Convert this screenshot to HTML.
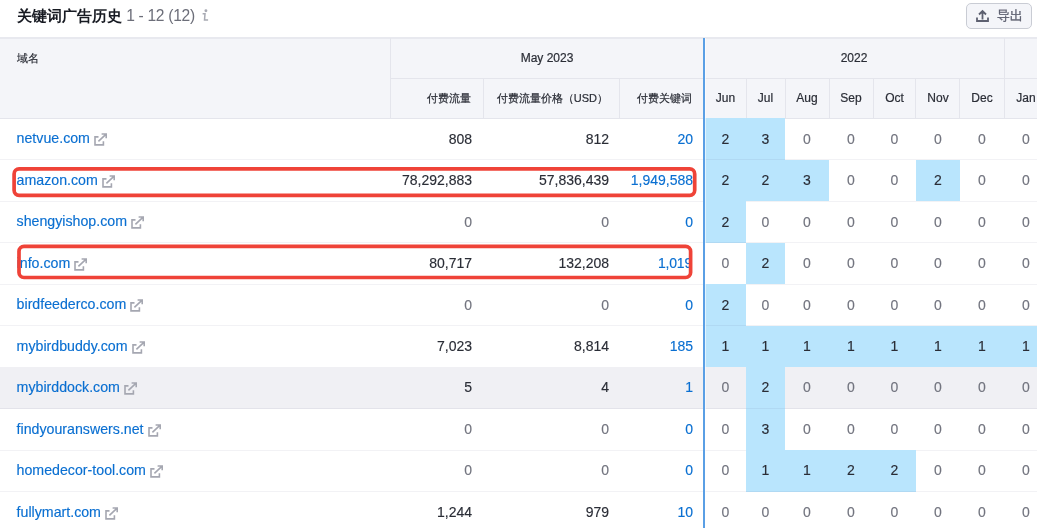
<!DOCTYPE html><html><head><meta charset="utf-8"><style>
*{margin:0;padding:0;box-sizing:border-box}
html,body{width:1037px;height:528px;overflow:hidden;background:#fff;font-family:"Liberation Sans",sans-serif;color:#171a22}
.abs{position:absolute}
.title{left:17px;top:6px;font-size:15px;font-weight:bold;color:#171a22;line-height:20px;white-space:nowrap}
.title .cnt{font-weight:normal;color:#6c6e79;font-size:15.6px;letter-spacing:-0.3px}
.title .i{font-style:italic;color:#a4a6ae;font-family:"Liberation Serif",serif;font-size:14px;margin-left:6px}
.exp{left:966px;top:3px;width:66px;height:26px;border:1px solid #c9ccd4;border-radius:5px;background:#f4f5f9;font-size:13px;color:#5d6070}
.hdr{left:0;top:37px;width:1037px;height:82px;background:#f4f5f9;border-top:2px solid #e8e9ef;border-bottom:1px solid #e4e5ec}
.vl{width:1px;background:#e4e5ec}
.hl{height:1px;background:#e4e5ec}
.ht{font-size:12px;color:#2a2d36;white-space:nowrap;line-height:14px;-webkit-text-stroke:0.2px #2a2d36}
.row{left:0;width:1037px}
.rb{left:0;width:1037px;height:1px;background:rgba(30,40,80,0.06)}
.cell{position:absolute;top:0;bottom:0;display:flex;align-items:center;font-size:14px;white-space:nowrap;color:#2a2d36;-webkit-text-stroke:0.15px currentColor;padding-bottom:1px}
.num{justify-content:flex-end;padding-right:11px}
.mc{justify-content:center}
.blue{background:#b9e5fd}
.link{color:#0a6fd1}
.dom{font-size:14.2px;padding-bottom:1.5px}
.zero{color:#72747f}
.ext{margin-left:4px;position:relative;top:1px}
</style></head><body><div id="wrap" style="position:absolute;left:0;top:0;width:1037px;height:528px;will-change:transform">
<div class="abs title">关键词广告历史 <span class="cnt">1 - 12 (12)</span></div>
<div class="abs exp"><svg class="abs" style="left:8px;top:4px" width="15" height="15" viewBox="0 0 15 15"><path d="M7.5 11.5V3M4 6.5L7.5 3L11 6.5M2 9.5V13H13V9.5" fill="none" stroke="#5d6070" stroke-width="1.8"/></svg><span class="abs" style="left:30px;top:3px;-webkit-text-stroke:0.3px #5d6070">导出</span></div>
<svg class="abs" style="left:200px;top:8px" width="12" height="15" viewBox="0 0 12 15"><circle cx="5.9" cy="2.8" r="1.45" fill="#a8aab3"/><path d="M2.6 5.8H5L4.5 12.1H8.1" fill="none" stroke="#a8aab3" stroke-width="1.5"/></svg>
<div class="abs hdr"></div>
<div class="abs ht" style="left:17px;top:51px;font-size:11px">域名</div>
<div class="abs vl" style="left:390px;top:38px;height:80px"></div>
<div class="abs hl" style="left:390px;top:78px;width:647px"></div>
<div class="abs vl" style="left:1004px;top:38px;height:80px"></div>
<div class="abs vl" style="left:483px;top:78px;height:40px"></div>
<div class="abs vl" style="left:619px;top:78px;height:40px"></div>
<div class="abs vl" style="left:746px;top:78px;height:40px"></div>
<div class="abs vl" style="left:785px;top:78px;height:40px"></div>
<div class="abs vl" style="left:829px;top:78px;height:40px"></div>
<div class="abs vl" style="left:873px;top:78px;height:40px"></div>
<div class="abs vl" style="left:915px;top:78px;height:40px"></div>
<div class="abs vl" style="left:959px;top:78px;height:40px"></div>
<div class="abs ht" style="left:390px;width:314px;top:51px;text-align:center">May 2023</div>
<div class="abs ht" style="left:704px;width:300px;top:51px;text-align:center">2022</div>
<div class="abs ht" style="left:390px;width:93px;top:91px;text-align:right;padding-right:12px;font-size:11px">付费流量</div>
<div class="abs ht" style="left:483px;width:137px;top:91px;text-align:right;padding-right:12px;font-size:11px">付费流量价格（USD）</div>
<div class="abs ht" style="left:620px;width:84px;top:91px;text-align:right;padding-right:12px;font-size:11px">付费关键词</div>
<div class="abs ht" style="left:705px;width:41px;top:91px;text-align:center">Jun</div>
<div class="abs ht" style="left:746px;width:39px;top:91px;text-align:center">Jul</div>
<div class="abs ht" style="left:785px;width:44px;top:91px;text-align:center">Aug</div>
<div class="abs ht" style="left:829px;width:44px;top:91px;text-align:center">Sep</div>
<div class="abs ht" style="left:873px;width:43px;top:91px;text-align:center">Oct</div>
<div class="abs ht" style="left:916px;width:44px;top:91px;text-align:center">Nov</div>
<div class="abs ht" style="left:960px;width:44px;top:91px;text-align:center">Dec</div>
<div class="abs ht" style="left:1004px;width:44px;top:91px;text-align:center">Jan</div>
<div class="abs row" style="top:118.4px;height:41.47px;">
<div class="cell link dom" style="left:16.6px;width:370px"><span>netvue.com</span><svg class="ext" width="14" height="14" viewBox="0.2 -0.7 14 14"><path d="M4.7 4.2H1.2V12.2H9.6V8.5" fill="none" stroke="#a5a7b1" stroke-width="1.6"/><path d="M4.6 8.6L12.3 1.4M7.8 1.3H12.4V5.6" fill="none" stroke="#a5a7b1" stroke-width="1.6"/></svg></div>
<div class="cell num " style="left:390px;width:93px">808</div>
<div class="cell num " style="left:483px;width:137px">812</div>
<div class="cell num link" style="left:620px;width:84px;">20</div>
<div class="cell mc blue" style="left:705px;width:41px">2</div>
<div class="cell mc blue" style="left:746px;width:39px">3</div>
<div class="cell mc zero" style="left:785px;width:44px">0</div>
<div class="cell mc zero" style="left:829px;width:44px">0</div>
<div class="cell mc zero" style="left:873px;width:43px">0</div>
<div class="cell mc zero" style="left:916px;width:44px">0</div>
<div class="cell mc zero" style="left:960px;width:44px">0</div>
<div class="cell mc zero" style="left:1004px;width:44px">0</div>
</div>
<div class="abs rb" style="top:159.37px"></div>
<div class="abs row" style="top:159.87px;height:41.47px;">
<div class="cell link dom" style="left:16.6px;width:370px"><span>amazon.com</span><svg class="ext" width="14" height="14" viewBox="0.2 -0.7 14 14"><path d="M4.7 4.2H1.2V12.2H9.6V8.5" fill="none" stroke="#a5a7b1" stroke-width="1.6"/><path d="M4.6 8.6L12.3 1.4M7.8 1.3H12.4V5.6" fill="none" stroke="#a5a7b1" stroke-width="1.6"/></svg></div>
<div class="cell num " style="left:390px;width:93px">78,292,883</div>
<div class="cell num " style="left:483px;width:137px">57,836,439</div>
<div class="cell num link" style="left:620px;width:84px;">1,949,588</div>
<div class="cell mc blue" style="left:705px;width:41px">2</div>
<div class="cell mc blue" style="left:746px;width:39px">2</div>
<div class="cell mc blue" style="left:785px;width:44px">3</div>
<div class="cell mc zero" style="left:829px;width:44px">0</div>
<div class="cell mc zero" style="left:873px;width:43px">0</div>
<div class="cell mc blue" style="left:916px;width:44px">2</div>
<div class="cell mc zero" style="left:960px;width:44px">0</div>
<div class="cell mc zero" style="left:1004px;width:44px">0</div>
</div>
<div class="abs rb" style="top:200.84px"></div>
<div class="abs row" style="top:201.34px;height:41.47px;">
<div class="cell link dom" style="left:16.6px;width:370px"><span>shengyishop.com</span><svg class="ext" width="14" height="14" viewBox="0.2 -0.7 14 14"><path d="M4.7 4.2H1.2V12.2H9.6V8.5" fill="none" stroke="#a5a7b1" stroke-width="1.6"/><path d="M4.6 8.6L12.3 1.4M7.8 1.3H12.4V5.6" fill="none" stroke="#a5a7b1" stroke-width="1.6"/></svg></div>
<div class="cell num zero" style="left:390px;width:93px">0</div>
<div class="cell num zero" style="left:483px;width:137px">0</div>
<div class="cell num link" style="left:620px;width:84px;">0</div>
<div class="cell mc blue" style="left:705px;width:41px">2</div>
<div class="cell mc zero" style="left:746px;width:39px">0</div>
<div class="cell mc zero" style="left:785px;width:44px">0</div>
<div class="cell mc zero" style="left:829px;width:44px">0</div>
<div class="cell mc zero" style="left:873px;width:43px">0</div>
<div class="cell mc zero" style="left:916px;width:44px">0</div>
<div class="cell mc zero" style="left:960px;width:44px">0</div>
<div class="cell mc zero" style="left:1004px;width:44px">0</div>
</div>
<div class="abs rb" style="top:242.31px"></div>
<div class="abs row" style="top:242.81px;height:41.47px;">
<div class="cell link dom" style="left:16.6px;width:370px"><span>info.com</span><svg class="ext" width="14" height="14" viewBox="0.2 -0.7 14 14"><path d="M4.7 4.2H1.2V12.2H9.6V8.5" fill="none" stroke="#a5a7b1" stroke-width="1.6"/><path d="M4.6 8.6L12.3 1.4M7.8 1.3H12.4V5.6" fill="none" stroke="#a5a7b1" stroke-width="1.6"/></svg></div>
<div class="cell num " style="left:390px;width:93px">80,717</div>
<div class="cell num " style="left:483px;width:137px">132,208</div>
<div class="cell num link" style="left:620px;width:84px;padding-right:12px;letter-spacing:-0.2px;">1,019</div>
<div class="cell mc zero" style="left:705px;width:41px">0</div>
<div class="cell mc blue" style="left:746px;width:39px">2</div>
<div class="cell mc zero" style="left:785px;width:44px">0</div>
<div class="cell mc zero" style="left:829px;width:44px">0</div>
<div class="cell mc zero" style="left:873px;width:43px">0</div>
<div class="cell mc zero" style="left:916px;width:44px">0</div>
<div class="cell mc zero" style="left:960px;width:44px">0</div>
<div class="cell mc zero" style="left:1004px;width:44px">0</div>
</div>
<div class="abs rb" style="top:283.78px"></div>
<div class="abs row" style="top:284.28px;height:41.47px;">
<div class="cell link dom" style="left:16.6px;width:370px"><span>birdfeederco.com</span><svg class="ext" width="14" height="14" viewBox="0.2 -0.7 14 14"><path d="M4.7 4.2H1.2V12.2H9.6V8.5" fill="none" stroke="#a5a7b1" stroke-width="1.6"/><path d="M4.6 8.6L12.3 1.4M7.8 1.3H12.4V5.6" fill="none" stroke="#a5a7b1" stroke-width="1.6"/></svg></div>
<div class="cell num zero" style="left:390px;width:93px">0</div>
<div class="cell num zero" style="left:483px;width:137px">0</div>
<div class="cell num link" style="left:620px;width:84px;">0</div>
<div class="cell mc blue" style="left:705px;width:41px">2</div>
<div class="cell mc zero" style="left:746px;width:39px">0</div>
<div class="cell mc zero" style="left:785px;width:44px">0</div>
<div class="cell mc zero" style="left:829px;width:44px">0</div>
<div class="cell mc zero" style="left:873px;width:43px">0</div>
<div class="cell mc zero" style="left:916px;width:44px">0</div>
<div class="cell mc zero" style="left:960px;width:44px">0</div>
<div class="cell mc zero" style="left:1004px;width:44px">0</div>
</div>
<div class="abs rb" style="top:325.25px"></div>
<div class="abs row" style="top:325.75px;height:41.47px;">
<div class="cell link dom" style="left:16.6px;width:370px"><span>mybirdbuddy.com</span><svg class="ext" width="14" height="14" viewBox="0.2 -0.7 14 14"><path d="M4.7 4.2H1.2V12.2H9.6V8.5" fill="none" stroke="#a5a7b1" stroke-width="1.6"/><path d="M4.6 8.6L12.3 1.4M7.8 1.3H12.4V5.6" fill="none" stroke="#a5a7b1" stroke-width="1.6"/></svg></div>
<div class="cell num " style="left:390px;width:93px">7,023</div>
<div class="cell num " style="left:483px;width:137px">8,814</div>
<div class="cell num link" style="left:620px;width:84px;">185</div>
<div class="cell mc blue" style="left:705px;width:41px">1</div>
<div class="cell mc blue" style="left:746px;width:39px">1</div>
<div class="cell mc blue" style="left:785px;width:44px">1</div>
<div class="cell mc blue" style="left:829px;width:44px">1</div>
<div class="cell mc blue" style="left:873px;width:43px">1</div>
<div class="cell mc blue" style="left:916px;width:44px">1</div>
<div class="cell mc blue" style="left:960px;width:44px">1</div>
<div class="cell mc blue" style="left:1004px;width:44px">1</div>
</div>
<div class="abs rb" style="top:366.72px"></div>
<div class="abs row" style="top:367.22px;height:41.47px;background:#f0f0f4;">
<div class="cell link dom" style="left:16.6px;width:370px"><span>mybirddock.com</span><svg class="ext" width="14" height="14" viewBox="0.2 -0.7 14 14"><path d="M4.7 4.2H1.2V12.2H9.6V8.5" fill="none" stroke="#a5a7b1" stroke-width="1.6"/><path d="M4.6 8.6L12.3 1.4M7.8 1.3H12.4V5.6" fill="none" stroke="#a5a7b1" stroke-width="1.6"/></svg></div>
<div class="cell num " style="left:390px;width:93px">5</div>
<div class="cell num " style="left:483px;width:137px">4</div>
<div class="cell num link" style="left:620px;width:84px;">1</div>
<div class="cell mc zero" style="left:705px;width:41px">0</div>
<div class="cell mc blue" style="left:746px;width:39px">2</div>
<div class="cell mc zero" style="left:785px;width:44px">0</div>
<div class="cell mc zero" style="left:829px;width:44px">0</div>
<div class="cell mc zero" style="left:873px;width:43px">0</div>
<div class="cell mc zero" style="left:916px;width:44px">0</div>
<div class="cell mc zero" style="left:960px;width:44px">0</div>
<div class="cell mc zero" style="left:1004px;width:44px">0</div>
</div>
<div class="abs rb" style="top:408.19px"></div>
<div class="abs row" style="top:408.69px;height:41.47px;">
<div class="cell link dom" style="left:16.6px;width:370px"><span>findyouranswers.net</span><svg class="ext" width="14" height="14" viewBox="0.2 -0.7 14 14"><path d="M4.7 4.2H1.2V12.2H9.6V8.5" fill="none" stroke="#a5a7b1" stroke-width="1.6"/><path d="M4.6 8.6L12.3 1.4M7.8 1.3H12.4V5.6" fill="none" stroke="#a5a7b1" stroke-width="1.6"/></svg></div>
<div class="cell num zero" style="left:390px;width:93px">0</div>
<div class="cell num zero" style="left:483px;width:137px">0</div>
<div class="cell num link" style="left:620px;width:84px;">0</div>
<div class="cell mc zero" style="left:705px;width:41px">0</div>
<div class="cell mc blue" style="left:746px;width:39px">3</div>
<div class="cell mc zero" style="left:785px;width:44px">0</div>
<div class="cell mc zero" style="left:829px;width:44px">0</div>
<div class="cell mc zero" style="left:873px;width:43px">0</div>
<div class="cell mc zero" style="left:916px;width:44px">0</div>
<div class="cell mc zero" style="left:960px;width:44px">0</div>
<div class="cell mc zero" style="left:1004px;width:44px">0</div>
</div>
<div class="abs rb" style="top:449.66px"></div>
<div class="abs row" style="top:450.16px;height:41.47px;">
<div class="cell link dom" style="left:16.6px;width:370px"><span>homedecor-tool.com</span><svg class="ext" width="14" height="14" viewBox="0.2 -0.7 14 14"><path d="M4.7 4.2H1.2V12.2H9.6V8.5" fill="none" stroke="#a5a7b1" stroke-width="1.6"/><path d="M4.6 8.6L12.3 1.4M7.8 1.3H12.4V5.6" fill="none" stroke="#a5a7b1" stroke-width="1.6"/></svg></div>
<div class="cell num zero" style="left:390px;width:93px">0</div>
<div class="cell num zero" style="left:483px;width:137px">0</div>
<div class="cell num link" style="left:620px;width:84px;">0</div>
<div class="cell mc zero" style="left:705px;width:41px">0</div>
<div class="cell mc blue" style="left:746px;width:39px">1</div>
<div class="cell mc blue" style="left:785px;width:44px">1</div>
<div class="cell mc blue" style="left:829px;width:44px">2</div>
<div class="cell mc blue" style="left:873px;width:43px">2</div>
<div class="cell mc zero" style="left:916px;width:44px">0</div>
<div class="cell mc zero" style="left:960px;width:44px">0</div>
<div class="cell mc zero" style="left:1004px;width:44px">0</div>
</div>
<div class="abs rb" style="top:491.13px"></div>
<div class="abs row" style="top:491.63px;height:41.47px;">
<div class="cell link dom" style="left:16.6px;width:370px"><span>fullymart.com</span><svg class="ext" width="14" height="14" viewBox="0.2 -0.7 14 14"><path d="M4.7 4.2H1.2V12.2H9.6V8.5" fill="none" stroke="#a5a7b1" stroke-width="1.6"/><path d="M4.6 8.6L12.3 1.4M7.8 1.3H12.4V5.6" fill="none" stroke="#a5a7b1" stroke-width="1.6"/></svg></div>
<div class="cell num " style="left:390px;width:93px">1,244</div>
<div class="cell num " style="left:483px;width:137px">979</div>
<div class="cell num link" style="left:620px;width:84px;">10</div>
<div class="cell mc zero" style="left:705px;width:41px">0</div>
<div class="cell mc zero" style="left:746px;width:39px">0</div>
<div class="cell mc zero" style="left:785px;width:44px">0</div>
<div class="cell mc zero" style="left:829px;width:44px">0</div>
<div class="cell mc zero" style="left:873px;width:43px">0</div>
<div class="cell mc zero" style="left:916px;width:44px">0</div>
<div class="cell mc zero" style="left:960px;width:44px">0</div>
<div class="cell mc zero" style="left:1004px;width:44px">0</div>
</div>
<div class="abs" style="left:703px;top:38px;width:2px;height:490px;background:#5a9fe5;box-shadow:1px 0 0 rgba(255,255,255,0.6)"></div>
<svg class="abs" style="left:0;top:0" width="1037" height="528"><rect x="14.1" y="168.9" width="680.6" height="26.4" rx="5" fill="none" stroke="#ef4338" stroke-width="3.7"/><rect x="19" y="246.3" width="671.6" height="31.2" rx="5" fill="none" stroke="#ef4338" stroke-width="3.7"/></svg>
</div></body></html>
